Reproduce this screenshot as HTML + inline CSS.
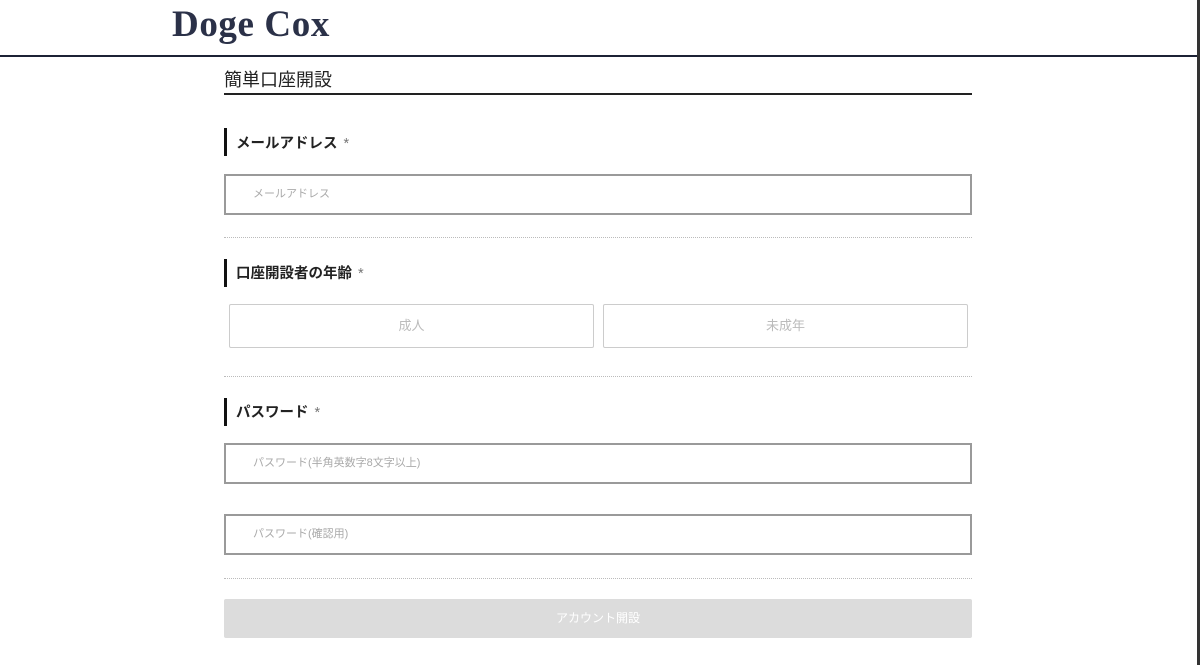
<!DOCTYPE html>
<html><head><meta charset="utf-8"><style>
body{margin:0;width:1200px;height:665px;background:#fff;position:relative;overflow:hidden;font-family:"Liberation Sans","Noto Sans CJK JP",sans-serif;color:#222}
.a{position:absolute}
.logo{left:172px;top:3px;font-family:"Liberation Serif","DejaVu Serif",serif;font-weight:bold;font-size:37px;color:#2b3148;letter-spacing:0.6px}
.hl{left:0;top:55px;width:1197px;height:2px;background:#1c2235}
.vb{left:1197px;top:0;width:3px;height:665px;background:#333}
.title{left:224px;top:66px;font-size:18px;color:#222}
.ul{left:224px;top:93px;width:748px;height:2px;background:#222}
.bar{left:224px;width:3px;height:28px;background:#111}
.lab{left:236px;font-size:14.5px;font-weight:bold;color:#222}
.lab span{color:#777;font-weight:normal;margin-left:6px}
.in{left:224px;width:744px;height:37px;border:2px solid #9a9a9a;font-size:11px;color:#aaa;line-height:37px;box-sizing:content-box;padding-left:0}
.in i{font-style:normal;margin-left:27px}
.dot{left:224px;width:748px;border-top:1px dotted #bbb;height:0}
.btn{top:304px;height:42px;width:363px;border:1px solid #ccc;border-radius:2px;text-align:center;line-height:42px;font-size:13px;color:#bbb}
.sub{left:224px;top:599px;width:748px;height:39px;background:#dcdcdc;border-radius:2px;text-align:center;line-height:39px;font-size:12px;color:#fff}
</style></head><body>
<div class="a logo">Doge Cox</div>
<div class="a hl"></div>
<div class="a vb"></div>
<div class="a title">簡単口座開設</div>
<div class="a ul"></div>
<div class="a bar" style="top:128px"></div>
<div class="a lab" style="top:132px">メールアドレス<span>*</span></div>
<div class="a in" style="top:174px"><i>メールアドレス</i></div>
<div class="a dot" style="top:237px"></div>
<div class="a bar" style="top:259px"></div>
<div class="a lab" style="top:262px">口座開設者の年齢<span>*</span></div>
<div class="a btn" style="left:229px">成人</div>
<div class="a btn" style="left:603px">未成年</div>
<div class="a dot" style="top:376px"></div>
<div class="a bar" style="top:398px"></div>
<div class="a lab" style="top:401px">パスワード<span>*</span></div>
<div class="a in" style="top:443px"><i>パスワード(半角英数字8文字以上)</i></div>
<div class="a in" style="top:514px"><i>パスワード(確認用)</i></div>
<div class="a dot" style="top:578px"></div>
<div class="a sub">アカウント開設</div>
</body></html>
